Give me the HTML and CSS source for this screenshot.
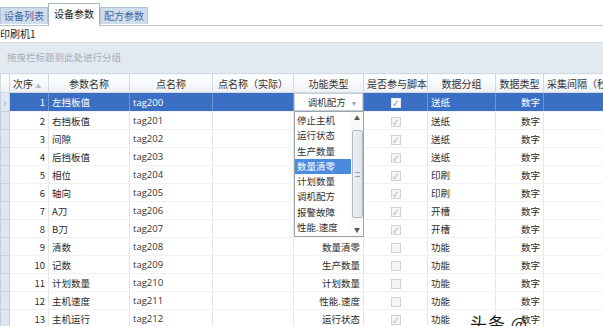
FILE: index.html
```html
<!DOCTYPE html>
<html lang="zh">
<head>
    <meta charset="UTF-8" />
    <title>设备参数</title>
    <link rel="stylesheet" href="styles.css">
</head>
<body>
<div class="okno">
    <div class="taby">
        <div class="tab">设备列表</div>
        <div class="tab aktivni">设备参数</div>
        <div class="tab">配方参数</div>
    </div>
    <div class="stroj">印刷机1</div>
    <div class="skupiny">拖曳栏标题到此处进行分组</div>

    <table class="mrizka">
        <colgroup>
            <col style="width: 9px">
            <col style="width: 39px">
            <col style="width: 81px">
            <col style="width: 83px">
            <col style="width: 81px">
            <col style="width: 70px">
            <col style="width: 64px">
            <col style="width: 68px">
            <col style="width: 48px">
            <col style="width: 90px">
        </colgroup>
        <thead>
            <tr>
                <th class="ind"></th>
                <th class="vlevo">次序 <span class="sipka">▲</span></th>
                <th>参数名称</th>
                <th>点名称</th>
                <th>点名称（实际）</th>
                <th>功能类型</th>
                <th>是否参与脚本</th>
                <th>数据分组</th>
                <th>数据类型</th>
                <th class="vlevo">采集间隔（秒）</th>
            </tr>
        </thead>
        <tbody>
            <tr class="vybrany">
                <td class="ind">›</td>
                <td class="cislo">1</td>
                <td>左挡板值</td>
                <td class="lat">tag200</td>
                <td></td>
                <td class="editor">
                    <div class="combo">调机配方 <span class="dolu">▾</span></div>
                    <div class="seznam">
                        <div class="polozky">
                            <div>停止主机</div>
                            <div>运行状态</div>
                            <div>生产数量</div>
                            <div class="oznacena">数量清零</div>
                            <div>计划数量</div>
                            <div>调机配方</div>
                            <div>报警故障</div>
                            <div>性能.速度</div>
                        </div>
                        <div class="posuvnik">
                            <span class="sip">▲</span>
                            <span class="jezdec"><i></i></span>
                            <span class="sip">▼</span>
                        </div>
                    </div>
                </td>
                <td class="stred"><span class="chk bily">✓</span></td>
                <td>送纸</td>
                <td class="cislo">数字</td>
                <td></td>
            </tr>
            <tr><td class="ind"></td><td class="cislo">2</td><td>右挡板值</td><td class="lat">tag201</td><td></td><td></td><td class="stred"><span class="chk">✓</span></td><td>送纸</td><td class="cislo">数字</td><td></td></tr>
            <tr><td class="ind"></td><td class="cislo">3</td><td>间隙</td><td class="lat">tag202</td><td></td><td></td><td class="stred"><span class="chk">✓</span></td><td>送纸</td><td class="cislo">数字</td><td></td></tr>
            <tr><td class="ind"></td><td class="cislo">4</td><td>后挡板值</td><td class="lat">tag203</td><td></td><td></td><td class="stred"><span class="chk">✓</span></td><td>送纸</td><td class="cislo">数字</td><td></td></tr>
            <tr><td class="ind"></td><td class="cislo">5</td><td>相位</td><td class="lat">tag204</td><td></td><td></td><td class="stred"><span class="chk">✓</span></td><td>印刷</td><td class="cislo">数字</td><td></td></tr>
            <tr><td class="ind"></td><td class="cislo">6</td><td>轴向</td><td class="lat">tag205</td><td></td><td></td><td class="stred"><span class="chk">✓</span></td><td>印刷</td><td class="cislo">数字</td><td></td></tr>
            <tr><td class="ind"></td><td class="cislo">7</td><td>A刀</td><td class="lat">tag206</td><td></td><td></td><td class="stred"><span class="chk">✓</span></td><td>开槽</td><td class="cislo">数字</td><td></td></tr>
            <tr><td class="ind"></td><td class="cislo">8</td><td>B刀</td><td class="lat">tag207</td><td></td><td></td><td class="stred"><span class="chk">✓</span></td><td>开槽</td><td class="cislo">数字</td><td></td></tr>
            <tr><td class="ind"></td><td class="cislo">9</td><td>清数</td><td class="lat">tag208</td><td></td><td class="cislo">数量清零</td><td class="stred"><span class="chk"></span></td><td>功能</td><td class="cislo">数字</td><td></td></tr>
            <tr><td class="ind"></td><td class="cislo">10</td><td>记数</td><td class="lat">tag209</td><td></td><td class="cislo">生产数量</td><td class="stred"><span class="chk"></span></td><td>功能</td><td class="cislo">数字</td><td></td></tr>
            <tr><td class="ind"></td><td class="cislo">11</td><td>计划数量</td><td class="lat">tag210</td><td></td><td class="cislo">计划数量</td><td class="stred"><span class="chk"></span></td><td>功能</td><td class="cislo">数字</td><td></td></tr>
            <tr><td class="ind"></td><td class="cislo">12</td><td>主机速度</td><td class="lat">tag211</td><td></td><td class="cislo">性能.速度</td><td class="stred"><span class="chk"></span></td><td>功能</td><td class="cislo">数字</td><td></td></tr>
            <tr><td class="ind"></td><td class="cislo">13</td><td>主机运行</td><td class="lat">tag212</td><td></td><td class="cislo">运行状态</td><td class="stred"><span class="chk">✓</span></td><td>功能</td><td class="cislo">数字</td><td></td></tr>
        </tbody>
    </table>

    <div class="vodoznak">头条 @</div>
</div>
</body>
</html>
```

FILE: styles.css
```css
html, body {
    margin: 0;
    padding: 0;
    background: #fff;
    overflow: hidden;
}

body {
    font-family: "Noto Sans CJK SC", "Noto Sans", sans-serif;
    font-size: 9.5px;
    color: #2b2b2b;
}

.okno {
    position: relative;
    width: 603px;
    height: 326px;
    overflow: hidden;
}

.taby {
    display: flex;
    align-items: flex-end;
    height: 25px;
    border-bottom: 1px solid #b9c6d6;
}

.tab {
    height: 16px;
    line-height: 16px;
    padding: 0 3px;
    margin-bottom: 1px;
    background: #cfdcec;
    color: #3e6aa6;
    font-size: 10px;
    border: 1px solid #b3c3d8;
    border-bottom: none;
}

.tab.aktivni {
    height: 22px;
    line-height: 20px;
    margin-bottom: -1px;
    padding: 0 5px;
    background: #fff;
    color: #222;
    border-color: #a9b6c6;
}

.stroj {
    height: 16px;
    line-height: 16px;
    font-size: 10px;
    color: #222;
}

.skupiny {
    height: 30px;
    line-height: 29px;
    padding-left: 7px;
    background: #e3e9f0;
    color: #a3adb8;
    font-size: 9.5px;
    border-top: 1px solid #d4dce6;
}

.mrizka {
    border-collapse: collapse;
    table-layout: fixed;
    width: 633px;
}

.mrizka th {
    height: 18px;
    padding: 0 3px;
    font-weight: normal;
    font-size: 10px;
    color: #333;
    background: linear-gradient(#ffffff, #eef1f5);
    border: 1px solid #d3d9e1;
    text-align: center;
    white-space: nowrap;
    overflow: hidden;
}

.mrizka th.vlevo {
    text-align: left;
}

.sipka {
    font-size: 6px;
    color: #b9c0c9;
    vertical-align: middle;
}

.mrizka td {
    height: 17px;
    padding: 0 3px;
    border-left: 1px solid #e3e6ea;
    border-right: 1px solid #e3e6ea;
    border-bottom: 1px solid #f1f2f4;
    white-space: nowrap;
    overflow: hidden;
}

.mrizka td.ind {
    padding: 0;
    background: #dfe6f0;
    border: 1px solid #c5d0de;
    color: #8aa0bd;
    font-size: 11px;
    text-align: center;
    line-height: 12px;
}

.cislo {
    text-align: right;
}

.stred {
    text-align: center;
}

.lat {
    font-family: "Open Sans", "Noto Sans", sans-serif;
    font-size: 9.5px;
    color: #333;
}

.vybrany td {
    background: #3b6fc3;
    color: #fff;
    border-left-color: #6f94cf;
    border-right-color: #6f94cf;
}

.vybrany .lat {
    color: #fff;
}

.mrizka td.editor {
    position: relative;
    overflow: visible;
    padding: 0;
    background: #fff;
}

.combo {
    height: 16px;
    line-height: 16px;
    padding-right: 6px;
    text-align: right;
    color: #333;
    border: 1px solid #c9ced6;
}

.dolu {
    margin-left: 4px;
    color: #9aa2ad;
    font-size: 8px;
}

.seznam {
    position: absolute;
    top: 18px;
    left: 0;
    width: 68px;
    height: 124px;
    display: flex;
    background: #fff;
    border: 1px solid #9aa3ae;
    z-index: 2;
}

.polozky {
    flex: 1;
    padding-top: 1px;
}

.polozky div {
    height: 15.3px;
    line-height: 15px;
    padding-left: 2px;
    color: #2f2f2f;
    font-size: 9.5px;
}

.polozky div.oznacena {
    background: #4a8be0;
    color: #fff;
}

.posuvnik {
    width: 12px;
    display: flex;
    flex-direction: column;
    align-items: center;
    background: #fafafa;
}

.sip {
    height: 12px;
    line-height: 12px;
    font-size: 6px;
    color: #555;
}

.jezdec {
    flex: 1;
    width: 9px;
    margin: 6px 0;
    display: flex;
    align-items: center;
    justify-content: center;
    background: linear-gradient(90deg, #eef1f5, #dfe4ea);
    border: 1px solid #aeb7c2;
    border-radius: 2px;
}

.jezdec i {
    width: 5px;
    height: 3px;
    border-top: 1px solid #9aa4b0;
    border-bottom: 1px solid #9aa4b0;
}

.chk {
    display: inline-block;
    width: 8px;
    height: 8px;
    line-height: 8px;
    font-size: 7px;
    text-align: center;
    color: #9ba3ab;
    background: #f4f5f6;
    border: 1px solid #cfd3d8;
    vertical-align: middle;
}

.chk.bily {
    background: #fff;
    color: #3a5f95;
    border-color: #e6ecf4;
}

.vodoznak {
    position: absolute;
    left: 470px;
    bottom: -9px;
    font-size: 17px;
    color: #1c1c1c;
    letter-spacing: 1px;
}
```
